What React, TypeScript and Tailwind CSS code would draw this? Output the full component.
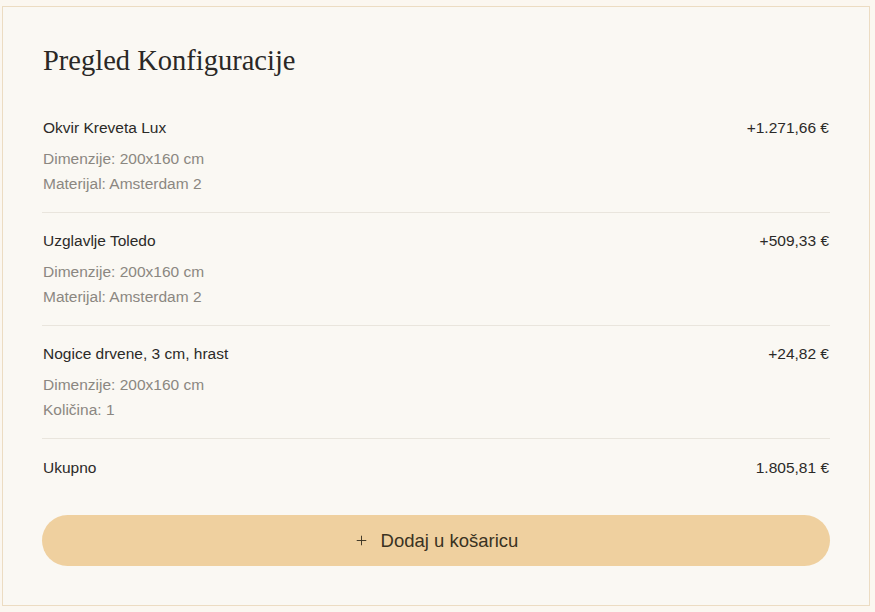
import { Plus } from 'lucide-react'

interface LineItem {
  name: string
  price: string
  details: string[]
}

const items: LineItem[] = [
  { name: 'Okvir Kreveta Lux', price: '+1.271,66 €', details: ['Dimenzije: 200x160 cm', 'Materijal: Amsterdam 2'] },
  { name: 'Uzglavlje Toledo', price: '+509,33 €', details: ['Dimenzije: 200x160 cm', 'Materijal: Amsterdam 2'] },
  { name: 'Nogice drvene, 3 cm, hrast', price: '+24,82 €', details: ['Dimenzije: 200x160 cm', 'Količina: 1'] },
]

export default function App() {
  return (
    <div className="min-h-[612px] w-[875px] bg-[#fbf7f0] pt-[6px] pl-[2px]" style={{ fontFamily: '"Liberation Sans", Arial, sans-serif' }}>
      <div className="w-[868px] h-[600px] border border-[#ecdcc2] bg-[#faf8f3] px-[39px] pt-[36px]">
        <h2 className="pl-px text-[28.5px] leading-[36px] text-[#2a2826] mb-[21px]" style={{ fontFamily: '"Liberation Serif", "Times New Roman", serif' }}>
          Pregled Konfiguracije
        </h2>

        {items.map((item) => (
          <div key={item.name} className="pt-[18px] pb-[16px] border-b border-[#e9e5dd]">
            <div className="flex items-center justify-between px-px text-[15.5px] leading-5 text-[#2b2a28]">
              <span>{item.name}</span>
              <span>{item.price}</span>
            </div>
            <div className="mt-2 px-px text-[15.5px] leading-[25px] text-[#8b8781]">
              {item.details.map((d) => (
                <div key={d}>{d}</div>
              ))}
            </div>
          </div>
        ))}

        <div className="pt-[19px] flex items-center justify-between px-px text-[15.5px] leading-5 text-[#2b2a28]">
          <span>Ukupno</span>
          <span>1.805,81 €</span>
        </div>

        <button className="mt-[37px] w-full h-[51px] rounded-full bg-[#efd09f] flex items-center justify-center gap-[12px] text-[18.5px] text-[#3a3222]">
          <Plus className="w-[15px] h-[15px]" strokeWidth={1.5} />
          <span>Dodaj u košaricu</span>
        </button>
      </div>
    </div>
  )
}
